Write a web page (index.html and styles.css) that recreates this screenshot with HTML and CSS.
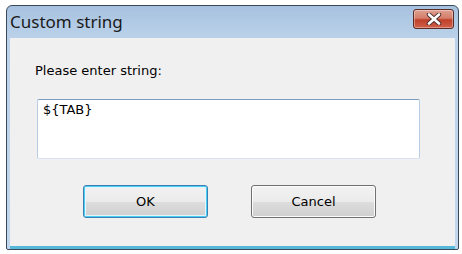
FILE: index.html
```html
<!DOCTYPE html>
<html>
<head>
<meta charset="utf-8">
<link rel="stylesheet" href="styles.css">
</head>
<body>
<div class="window">
  <div class="titlebar">
    <span class="title">Custom string</span>
    <button class="close" aria-label="Close">
      <svg width="16" height="12" viewBox="0 0 16 12">
        <path d="M3 1.5 L13 10.5 M13 1.5 L3 10.5" stroke="#4a2a2a" stroke-width="4.4" stroke-linecap="round"/>
        <path d="M3 1.5 L13 10.5 M13 1.5 L3 10.5" stroke="#ffffff" stroke-width="2.6" stroke-linecap="round"/>
      </svg>
    </button>
  </div>
  <div class="client">
    <div class="label">Please enter string:</div>
    <div class="textbox">${TAB}</div>
    <div class="buttons">
      <button class="btn default">OK</button>
      <button class="btn">Cancel</button>
    </div>
  </div>
</div>
</body>
</html>
```
FILE: styles.css
```css
html, body {
  margin: 0;
  padding: 0;
  background: #ffffff;
}
body {
  width: 462px;
  height: 254px;
  overflow: hidden;
  font-family: Tahoma, "DejaVu Sans", "Liberation Sans", sans-serif;
}
.window {
  margin: 5px 0 0 6px;
  width: 451px;
  height: 243px;
  border: 1px solid #3b4a5a;
  border-radius: 6px 6px 2px 2px;
  background: linear-gradient(to bottom, #a6c1df 0px, #bcd2ea 33px, #c2d7ed 100%);
  display: flex;
  flex-direction: column;
  box-sizing: content-box;
}
.titlebar {
  height: 32px;
  display: flex;
  align-items: center;
  justify-content: space-between;
  padding: 0 4px 0 3px;
}
.title {
  font-family: "Noto Sans", "Open Sans", sans-serif;
  font-size: 17px;
  color: #1a1a1a;
  margin-top: -1px;
}
.close {
  width: 41px;
  height: 20px;
  margin-top: -7px;
  padding: 0;
  border: 1px solid #5b2b26;
  border-radius: 3px;
  background: linear-gradient(to bottom, #e0a090 0%, #d47e6a 45%, #c0402a 55%, #d0604a 100%);
  box-shadow: inset 0 0 0 1px rgba(255,255,255,0.35);
  display: flex;
  align-items: center;
  justify-content: center;
}
.client {
  flex: 1;
  margin: 0 3px 0 3px;
  background: #f0f0f0;
  border-bottom: 3px solid #56b8d8;
  padding: 25px 0 0 25px;
  display: flex;
  flex-direction: column;
  font-size: 13px;
  color: #000;
}
.label {
  height: 16px;
  line-height: 16px;
}
.textbox {
  margin: 20px 0 0 2px;
  width: 376px;
  height: 56px;
  background: #fff;
  border: 1px solid #b9cde2;
  border-top-color: #7d9ec0;
  border-bottom-color: #d7e3ef;
  border-radius: 2px;
  padding: 2px 0 0 5px;
  line-height: 16px;
}
.buttons {
  display: flex;
  gap: 43px;
  margin: 26px 0 0 48px;
}
.btn {
  width: 125px;
  height: 33px;
  border: 1px solid #707070;
  border-radius: 3px;
  background: linear-gradient(to bottom, #f2f2f2 0%, #ebebeb 50%, #dddddd 51%, #cfcfcf 100%);
  font-family: Tahoma, "DejaVu Sans", "Liberation Sans", sans-serif;
  font-size: 13px;
  color: #000;
  padding: 0;
  box-shadow: inset 0 0 0 1px #fbfbfb;
}
.btn.default {
  border-color: #3c7fb1;
  box-shadow: inset 0 0 0 1px #48cff6, inset 0 0 0 2px #e6f4fb;
}
```
